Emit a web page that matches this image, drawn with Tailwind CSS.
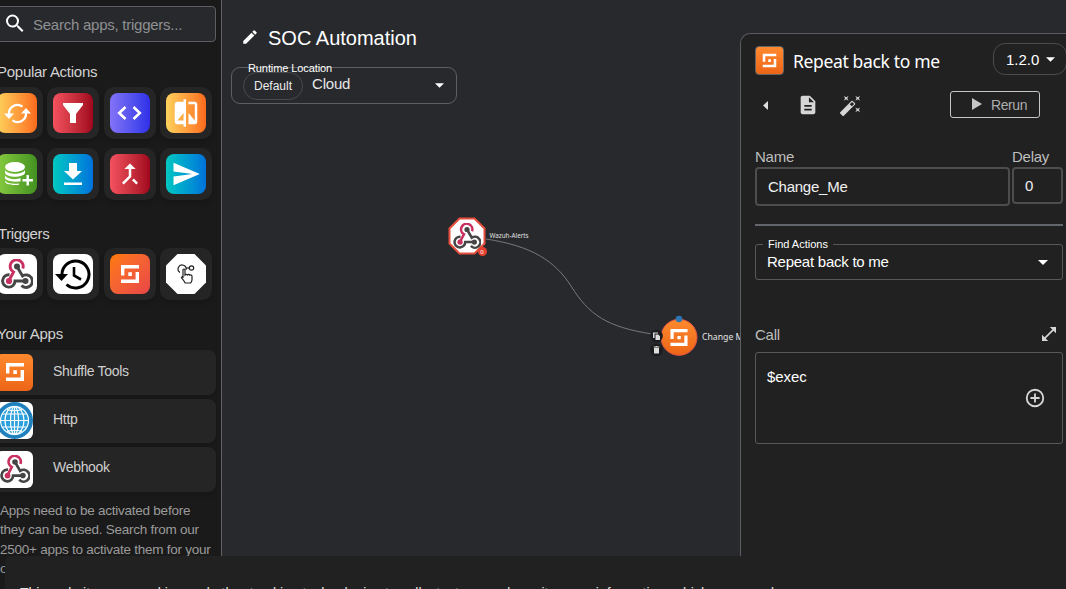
<!DOCTYPE html>
<html lang="en">
<head>
<meta charset="utf-8">
<title>SOC Automation</title>
<script src="https://cdn.jsdelivr.net/npm/@tailwindcss/browser@4"></script>
</head>
<body class="relative h-[589px] w-[1066px] overflow-hidden bg-[#27292d] font-['Liberation_Sans',Arial,sans-serif] text-white">
<svg class="absolute h-0 w-0">
  <defs>
    <linearGradient id="og" x1="0" y1="0" x2="0" y2="1"><stop offset="0" stop-color="#ff8a2e"/><stop offset="1" stop-color="#ec6517"/></linearGradient>
    <symbol id="shuffle" viewBox="0 0 20 20"><path fill="#fff" d="M1 1h18v3.400H4.400V11.500H1zM19 8v11H1v-3.400h14.600V8zM8.300 8.300h3.600v3.600H8.300z"/></symbol>
    <symbol id="hook" viewBox="0 0 32 30">
      <g fill="none" stroke-width="2.900">
        <path stroke="#c9305f" d="M21.800 9.500A6.500 6.500 0 1 0 12.500 13L8 21.500"/>
        <path stroke="#454545" d="M16 7.500l5.500 9.500a6.300 6.300 0 1 1-1 9.500"/>
        <path stroke="#454545" d="M8.500 15.800A6.200 6.200 0 1 0 14 22h10"/>
      </g>
      <circle cx="16" cy="7.500" r="3" fill="#454545"/><circle cx="8" cy="22" r="3.100" fill="#c9305f"/><circle cx="24.500" cy="22" r="3" fill="#454545"/>
    </symbol>
    <symbol id="down" viewBox="0 0 10 5"><path fill="#fff" d="M0 0h10L5 5z"/></symbol>
  </defs>
</svg>
<div class="flex h-[589px]">
  <aside class="h-full w-[222px] shrink-0 overflow-hidden border-r border-[#606266] bg-[#1a1a1a]">
    <div class="-ml-[9px] flex w-[225px] flex-col pt-[6px]">
      <div class="flex h-9 items-center rounded-[4px] border border-[#5c5e62] bg-[#27292d] pl-[11px]">
        <svg class="h-[24px] w-[24px]" viewBox="0 0 24 24" fill="#fff"><path d="M15.500 14h-.79l-.28-.27A6.470 6.470 0 0 0 16 9.500 6.500 6.500 0 1 0 9.500 16c1.610 0 3.090-.59 4.230-1.570l.27.28v.79l5 4.990L20.490 19zm-6 0C7.010 14 5 11.990 5 9.500S7.010 5 9.500 5 14 7.010 14 9.500 11.990 14 9.500 14" transform="translate(0 -.5)"/></svg>
        <span class="mt-[2px] ml-[6px] text-[15px] tracking-[-0.25px] text-[#8f9092]">Search apps, triggers...</span>
      </div>
      <h2 class="mt-[20px] h-[20px] pl-[6px] text-[15px] leading-5 tracking-[-0.27px] text-[#d2d2d2]">Popular Actions</h2>
      <div class="mt-[5px] grid w-[221px] grid-cols-[repeat(4,52px)] justify-between gap-y-[9px]">
        <div class="flex h-[52px] items-center justify-center rounded-[10px] bg-[#252525] shadow-md"><div class="flex size-10 items-center justify-center rounded-[8px] bg-linear-to-r from-[#fcd15c] to-[#fb6a1c]">
          <svg class="size-[27px]" viewBox="0 0 27 27" fill="none" stroke="#fff" stroke-width="2.300"><path d="M5 14a8.500 8.500 0 0 1 13.500-7.400M22 13a8.500 8.500 0 0 1-13.500 7.400"/><path fill="#fff" stroke="none" d="M0 13.500h10L5 19zM17 13.500h10L22 8z"/></svg></div></div>
        <div class="flex h-[52px] items-center justify-center rounded-[10px] bg-[#252525] shadow-md"><div class="flex size-10 items-center justify-center rounded-[8px] bg-linear-to-r from-[#f5515f] to-[#a1051d]">
          <svg class="size-5" viewBox="0 0 20 20" fill="#fff"><path d="M0 0h20v2l-7 9v9H7v-9L0 2z"/></svg></div></div>
        <div class="flex h-[52px] items-center justify-center rounded-[10px] bg-[#252525] shadow-md"><div class="flex size-10 items-center justify-center rounded-[8px] bg-linear-to-r from-[#8472f7] to-[#302ee8]">
          <svg class="h-[14px] w-[25px]" viewBox="0 0 25 14" fill="none" stroke="#fff" stroke-width="2.600"><path d="M8.500 1L2.200 7l6.300 6M16.500 1l6.300 6-6.300 6"/></svg></div></div>
        <div class="flex h-[52px] items-center justify-center rounded-[10px] bg-[#252525] shadow-md"><div class="flex size-10 items-center justify-center rounded-[8px] bg-linear-to-r from-[#fcd15c] to-[#fb6a1c]">
          <svg class="size-[30px]" viewBox="0 0 24 24" fill="#fff"><path d="M10 3H5c-1.100 0-2 .9-2 2v14c0 1.100.9 2 2 2h5v2h2V1h-2zm0 15H5l5-6zm9-15h-5v2h5v13l-5-6v9h5c1.100 0 2-.9 2-2V5c0-1.100-.9-2-2-2"/></svg></div></div>
        <div class="flex h-[52px] items-center justify-center rounded-[10px] bg-[#252525] shadow-md"><div class="flex size-10 items-center justify-center rounded-[8px] bg-linear-to-r from-[#86cb40] to-[#439121]">
          <svg class="ml-[3px] h-[26px] w-[29px]" viewBox="0 0 29 26"><g fill="#fff"><ellipse cx="11" cy="6" rx="10" ry="5"/><path d="M1 9c3 5 17 5 20 0v3c-2 5-18 5-20 0zM1 14.500c3 4 11 4.500 15.500 2.500v3.500C11 21 3 20.500 1 17.500zM1 20c3 3 9 3 14 2.500v1.200C10 24.500 3 24 1 21z"/><path d="M22.500 14h2.400v4h4v2.400h-4v4h-2.400v-4h-4V18h4z"/></g></svg></div></div>
        <div class="flex h-[52px] items-center justify-center rounded-[10px] bg-[#252525] shadow-md"><div class="flex size-10 items-center justify-center rounded-[8px] bg-linear-to-r from-[#0ac7c0] to-[#0271db]">
          <svg class="h-[22px] w-[18px]" viewBox="0 0 18 22" fill="#fff"><path d="M5 0h8v8h5l-9 8.500L0 8h5zM0 19.500h18V22H0z"/></svg></div></div>
        <div class="flex h-[52px] items-center justify-center rounded-[10px] bg-[#252525] shadow-md"><div class="flex size-10 items-center justify-center rounded-[8px] bg-linear-to-r from-[#f5515f] to-[#a1051d]">
          <svg class="size-[30px]" viewBox="0 0 24 24" fill="#fff"><path d="M17 20.410 18.410 19 15 15.590 13.590 17zM7.500 8H11v5.590L5.590 19 7 20.410l6-6V8h3.500L12 3.500z"/></svg></div></div>
        <div class="flex h-[52px] items-center justify-center rounded-[10px] bg-[#252525] shadow-md"><div class="flex size-10 items-center justify-center rounded-[8px] bg-linear-to-r from-[#0ac7c0] to-[#0271db]">
          <svg class="size-[30px]" viewBox="0 0 24 24" fill="#fff"><path d="M2.010 21 23 12 2.010 3 2 10l15 2-15 2z"/></svg></div></div>
      </div>
      <h2 class="mt-[24px] h-[20px] pl-[7px] text-[15px] leading-5 tracking-[-0.4px] text-[#d2d2d2]">Triggers</h2>
      <div class="mt-[4px] grid w-[221px] grid-cols-[repeat(4,52px)] justify-between">
        <div class="flex h-[52px] items-center justify-center rounded-[10px] bg-[#252525] shadow-md"><div class="flex size-10 items-center justify-center rounded-[8px] bg-white"><svg class="h-[30px] w-[32px]"><use href="#hook"/></svg></div></div>
        <div class="flex h-[52px] items-center justify-center rounded-[10px] bg-[#252525] shadow-md"><div class="flex size-10 items-center justify-center rounded-[8px] bg-white">
          <svg class="size-9" viewBox="0 0 36 36" fill="none" stroke="#000" stroke-width="3"><path d="M7 19A13.500 13.500 0 1 1 11.500 28.500"/><path fill="#000" stroke="none" d="M0 18h13l-6.500 7z"/><path stroke-width="2.600" d="M19 11v8.500l7 4"/></svg></div></div>
        <div class="flex h-[52px] items-center justify-center rounded-[10px] bg-[#252525] shadow-md"><div class="flex size-10 items-center justify-center rounded-[8px] bg-linear-to-br from-[#ff7a00] to-[#e84545]"><svg class="size-5"><use href="#shuffle"/></svg></div></div>
        <div class="flex h-[52px] items-center justify-center rounded-[10px] bg-[#252525] shadow-md">
          <svg class="size-10" viewBox="0 0 40 40"><path fill="#fff" d="M11.500 0h17L40 11.500v17L28.500 40h-17L0 28.500v-17z"/><g fill="none" stroke="#222" stroke-width="1.200"><path d="M14 18.400a4 4 0 1 1 6-2.500"/><path d="M20 14h3"/><circle cx="25.500" cy="14" r="2.200"/><path d="M17 24v-8.300q1-1.400 2 0V21q1.300-1.400 2.400 0 1.200-1.200 2.300.2 1.800-1 2.300 1V26q-.3 2-1.500 3h-5.300q-1-2-3.800-5.300.6-1.500 1.600-.7z"/></g></svg></div>
      </div>
      <h2 class="mt-[24px] h-[20px] pl-[6px] text-[15px] leading-5 tracking-[-0.2px] text-[#d2d2d2]">Your Apps</h2>
      <div class="mt-[6px] flex flex-col gap-[4px] text-[14px] tracking-[-0.3px] text-[#cfcfcf]">
        <div class="flex h-[44.500px] items-center rounded-[8px] bg-[#252525] pl-[5px] shadow-md"><div class="flex size-[37px] items-center justify-center rounded-[6px] bg-linear-to-b from-[#ff8a2e] to-[#ec6517]"><svg class="size-[20px]"><use href="#shuffle"/></svg></div><span class="-mt-[2px] ml-5">Shuffle Tools</span></div>
        <div class="flex h-[44.500px] items-center rounded-[8px] bg-[#252525] pl-[5px] shadow-md"><div class="size-[37px] overflow-hidden rounded-[6px] bg-white">
          <svg class="size-[37px]" viewBox="0 0 37 37"><circle cx="18.500" cy="18.500" r="18.500" fill="#2080bd"/><circle cx="18.500" cy="18.500" r="15" fill="#2ba0dc"/><g fill="none" stroke="#fff" stroke-width="1.200"><circle cx="18.500" cy="18.500" r="14"/><ellipse cx="18.500" cy="18.500" rx="9.500" ry="14"/><ellipse cx="18.500" cy="18.500" rx="4" ry="14"/><path d="M18.500 4.500v28M4.500 18.500h28M6.500 12h24M6.500 25h24M11 7.500q7.500 2.500 15 0M11 29.500q7.500-2.500 15 0"/></g></svg></div><span class="-mt-[3px] ml-5">Http</span></div>
        <div class="flex h-[44.500px] items-center rounded-[8px] bg-[#252525] pl-[5px] shadow-md"><div class="flex size-[37px] items-center justify-center rounded-[6px] bg-white"><svg class="h-[28px] w-[30px]"><use href="#hook"/></svg></div><span class="-mt-[4px] ml-5">Webhook</span></div>
      </div>
      <p class="mt-[9px] pl-[9px] text-[13.500px] leading-[19.500px] tracking-[-0.25px] whitespace-nowrap text-[#9b9b9b]">Apps need to be activated before<br>they can be used. Search from our<br>2500+ apps to activate them for your<br>organization.</p>
    </div>
  </aside>
  <main class="relative h-full w-[518px] shrink-0 overflow-hidden">
    <svg class="absolute inset-0 h-[589px] w-[518px]" fill="none" stroke="#77787a" stroke-width="1"><path d="M264 239C310 246 333 261 349 286C367 315 385 327 430 334"/></svg>
    <div class="flex items-center gap-[9px] pt-[25px] pl-[19px]">
      <svg class="-mt-[3px] size-[18px]" viewBox="0 0 24 24" fill="#fff"><path d="M3 17.250V21h3.750L17.810 9.940l-3.750-3.750zM20.710 7.040a1 1 0 0 0 0-1.410l-2.340-2.340a1 1 0 0 0-1.410 0l-1.830 1.830 3.750 3.750z"/></svg>
      <h1 class="text-[20px] leading-[26px]">SOC Automation</h1>
    </div>
    <div class="relative mt-4 ml-[9px] flex h-[37px] w-[226px] items-center rounded-[9px] border border-[#5c5e62] pr-3 pl-[11px]">
      <span class="flex h-7 w-[60px] items-center justify-center rounded-full border border-[#47494d] text-[12px] text-[#ececec]">Default</span>
      <span class="mb-[3px] ml-[9px] text-[15px] tracking-[-0.2px] text-[#e6e6e6]">Cloud</span>
      <svg class="ml-auto h-[5px] w-[9px]"><use href="#down"/></svg>
      <span class="absolute -top-[7px] left-[15px] px-[1px] text-[11px] leading-[14px] tracking-[-0.1px]">Runtime Location</span>
    </div>
    <div class="absolute top-[217px] left-[226px]">
      <svg class="size-[38px]" viewBox="0 0 38 38"><path fill="#fff" stroke="#e5503e" stroke-width="2" d="M11.500 1.500h15l10 10v15l-10 10h-15l-10-10v-15z"/><use href="#hook" x="5" y="6" width="28" height="26"/></svg>
    </div>
    <span class="absolute top-[247px] left-[255.500px] flex size-[9px] items-center justify-center rounded-full bg-[#e5402f] font-['Noto_Sans',sans-serif] text-[6px] leading-none">0</span>
    <span class="absolute top-[231px] left-[267.500px] font-['Noto_Sans',sans-serif] text-[6.300px] leading-[9px] text-[#e0e0e0]">Wazuh-Alerts</span>
    <svg class="absolute top-[314px] left-[427px] h-[44px] w-[50px]" viewBox="0 0 50 44"><circle cx="30" cy="23.300" r="18" fill="url(#og)" stroke="#e65342" stroke-width="1"/><use href="#shuffle" x="20.500" y="14" width="19" height="19"/><circle cx="30" cy="5" r="3.300" fill="#2c76b4"/><circle cx="7.500" cy="22" r="6.300" fill="#1c1c1e"/><circle cx="7.500" cy="36" r="6.300" fill="#1c1c1e"/><path fill="#ddd" d="M4 18.500h5v1H5.500V24H4zM6.500 20.500h2.700l1.800 1.800V26H6.500zM5 34h5v5.500H5zM4.700 32.500h1.800l.4-.6h1.300l.4.6h1.800v1H4.700z"/></svg>
    <span class="absolute top-[331px] left-[480px] font-['Noto_Sans',sans-serif] text-[8.700px] leading-3 whitespace-nowrap text-[#e4e4e4]">Change Me</span>
  </main>
  <section class="mt-[33px] flex w-[340px] shrink-0 flex-col rounded-tl-[10px] border-t border-l border-[#5b5d61] bg-[#212121] pl-[14px]">
    <div class="flex h-[51px] items-center">
      <div class="mt-[2px] flex size-[29px] items-center justify-center rounded-[4px] border border-[#666] bg-linear-to-b from-[#ff8a2e] to-[#ec6517]"><svg class="size-[15px]"><use href="#shuffle"/></svg></div>
      <h2 class="mt-[4px] ml-[9px] w-[200px] font-['Noto_Sans',sans-serif] text-[17.500px] tracking-[-0.35px]">Repeat back to me</h2>
      <div class="-mt-[1px] flex h-8 w-[74px] items-center gap-[7px] rounded-[12px] border border-[#4c4c4c] pl-3 text-[15px]"><span class="mt-[2px]">1.2.0</span><svg class="h-[5px] w-[9px]"><use href="#down"/></svg></div>
    </div>
    <div class="mt-[6px] flex h-[28px] items-center">
      <svg class="ml-[8px] h-[9px] w-[5px]" viewBox="0 0 5 9" fill="#ddd"><path d="M5 0v9L0 4.500z"/></svg>
      <svg class="ml-[29px] size-[22px]" viewBox="0 0 24 24" fill="#d6d6d6"><path d="M14 2H6c-1.100 0-1.990.9-1.990 2L4 20c0 1.100.89 2 1.990 2H18c1.100 0 2-.9 2-2V8zm2 16H8v-2h8zm0-4H8v-2h8zm-3-5V3.500L18.500 9z"/></svg>
      <svg class="ml-[20px] size-[23px]" viewBox="0 0 24 24" fill="#d6d6d6"><path d="M7.500 5.600 10 7 8.600 4.500 10 2 7.500 3.400 5 2l1.400 2.500L5 7zm12 9.800L17 14l1.400 2.500L17 19l2.500-1.400L22 19l-1.400-2.500L22 14zM22 2l-2.500 1.400L17 2l1.400 2.500L17 7l2.500-1.400L22 7l-1.400-2.500zm-7.630 5.290a1 1 0 0 0-1.410 0L1.290 18.960a1 1 0 0 0 0 1.410l2.340 2.340c.39.39 1.020.39 1.410 0L16.700 11.050a1 1 0 0 0 0-1.410zm-1.030 5.490-2.120-2.120 2.440-2.440 2.120 2.120z"/></svg>
      <div class="-mt-[2px] ml-[88px] flex h-[27px] w-[90px] items-center rounded-[3px] border border-[#c6c6c6] pl-[21px] text-[14px] tracking-[-0.4px] text-[#acacac]"><svg class="mr-[9px] h-3 w-[10px]" viewBox="0 0 10 12" fill="#c6c6c6"><path d="M0 0l10 6-10 6z"/></svg><span class="mt-[3px]">Rerun</span></div>
    </div>
    <div class="mt-[28px] flex gap-[2px] text-[15px] tracking-[-0.25px]">
      <label class="flex w-[255px] flex-col text-[#bdbdbd]"><span class="h-5 leading-5">Name</span><span class="flex h-[39px] items-center rounded-[4px] border-2 border-[#4d4d4d] pt-[2px] pl-[11px] text-[#f1f1f1]">Change_Me</span></label>
      <label class="flex w-[51px] flex-col text-[#bdbdbd]"><span class="h-5 leading-5">Delay</span><span class="flex h-[37px] items-center rounded-[4px] border-2 border-[#4d4d4d] pt-[1px] pl-[11px] text-[#f1f1f1]">0</span></label>
    </div>
    <div class="mt-[18px] h-[2px] w-[308px] bg-[#63666a]"></div>
    <div class="relative mt-[18px] flex h-9 w-[308px] items-center rounded-[3px] border border-[#585858] pr-[14px] pl-[11px] text-[15px] tracking-[-0.25px]">Repeat back to me<svg class="ml-auto h-[5px] w-[10px]"><use href="#down"/></svg><span class="absolute -top-[8px] left-[7px] bg-[#212121] px-[5px] text-[11px] leading-[14px] tracking-[0px]">Find Actions</span></div>
    <div class="mt-[44px] flex h-[22px] w-[308px] items-center justify-between pr-[7px] text-[15px] tracking-[-0.25px] text-[#bdbdbd]">Call
      <svg class="-mt-[2px] size-[14px]" viewBox="0 0 18 18" fill="#d6d6d6"><path d="M18 8V0h-8l3.290 3.290-10 10L0 10v8h8l-3.290-3.290 10-10z"/></svg></div>
    <div class="mt-[6px] flex h-[92px] w-[308px] items-center justify-between rounded-[3px] border border-[#585858] pr-[16px] pl-[11px] text-[15px] tracking-[-0.1px]"><span class="-mt-[42px]">$exec</span>
      <svg class="size-[22px]" viewBox="0 0 24 24" fill="#d6d6d6"><path d="M13 7h-2v4H7v2h4v4h2v-4h4v-2h-4zm-1-5a10 10 0 1 0 0 20 10 10 0 0 0 0-20m0 18a8 8 0 1 1 0-16 8 8 0 0 1 0 16"/></svg></div>
  </section>
</div>
<div class="absolute top-[556px] left-[5px] h-[33px] w-[1061px] overflow-hidden rounded-tl-[6px] bg-[#212121] pt-[27px] pl-[15px] text-[14px] leading-5 whitespace-nowrap text-[#e0e0e0]">This website uses cookies and other tracking technologies to collect, store, and monitor your information, which we record</div>
</body>
</html>
